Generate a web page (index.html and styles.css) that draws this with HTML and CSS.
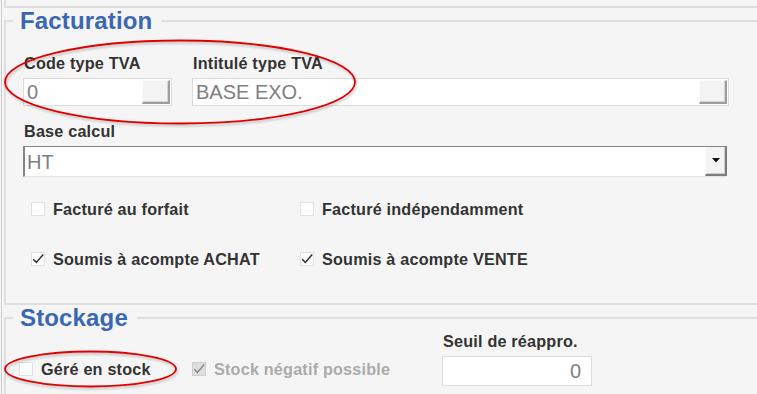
FILE: index.html
```html
<!DOCTYPE html>
<html lang="fr">
<head>
<meta charset="utf-8">
<title>Fiche article</title>
<link rel="stylesheet" href="styles.css">
</head>
<body>
<div class="page">
  <div class="prev"></div>

  <fieldset class="group fact">
    <legend class="legend">Facturation</legend>
    <div class="body">
      <div class="fields">
        <div class="field">
          <label class="lbl">Code type TVA</label>
          <div class="input"><span class="val">0</span><span class="pick"></span></div>
        </div>
        <div class="field">
          <label class="lbl">Intitulé type TVA</label>
          <div class="input"><span class="val">BASE EXO.</span><span class="pick"></span></div>
        </div>
      </div>

      <div class="field base">
        <label class="lbl">Base calcul</label>
        <div class="select">
          <span class="val">HT</span>
          <span class="drop"><svg width="8" height="5" viewBox="0 0 8 5"><polygon points="0,0 8,0 4,4.5" fill="#111"/></svg></span>
        </div>
      </div>

      <div class="checks">
        <div class="chk"><span class="box"></span><span class="txt">Facturé au forfait</span></div>
        <div class="chk"><span class="box"></span><span class="txt">Facturé indépendamment</span></div>
        <div class="chk"><span class="box"><svg width="14" height="14" viewBox="0 0 14 14"><polyline points="2.2,7.2 5.4,10.4 12.2,2.4" fill="none" stroke="#333" stroke-width="1.5"/></svg></span><span class="txt">Soumis à acompte ACHAT</span></div>
        <div class="chk"><span class="box"><svg width="14" height="14" viewBox="0 0 14 14"><polyline points="2.2,7.2 5.4,10.4 12.2,2.4" fill="none" stroke="#333" stroke-width="1.5"/></svg></span><span class="txt">Soumis à acompte VENTE</span></div>
      </div>
    </div>
  </fieldset>

  <fieldset class="group stock">
    <legend class="legend">Stockage</legend>
    <div class="stock-row">
      <div class="chk tall"><span class="box"></span><span class="txt">Géré en stock</span></div>
      <div class="chk tall disabled"><span class="box"><svg width="14" height="14" viewBox="0 0 14 14"><polyline points="2.2,7.2 5.4,10.4 12.2,2.4" fill="none" stroke="#8a8a8a" stroke-width="1.5"/></svg></span><span class="txt">Stock négatif possible</span></div>
      <div class="field">
        <label class="lbl">Seuil de réappro.</label>
        <div class="input num"><span class="val">0</span></div>
      </div>
    </div>
  </fieldset>
</div>

<svg class="marks" width="757" height="394" viewBox="0 0 757 394">
  <ellipse cx="180" cy="82" rx="175" ry="41.5" fill="none" stroke="#e00000" stroke-width="1.8"/>
  <ellipse cx="90.5" cy="369" rx="85.5" ry="17.5" fill="none" stroke="#e00000" stroke-width="1.8"/>
</svg>
</body>
</html>
```
FILE: styles.css
```css
* { box-sizing: border-box; }

body {
  margin: 0;
  padding-left: 1px;
  width: 757px;
  height: 394px;
  overflow: hidden;
  position: relative;
  background: #f5f5f5;
  font-family: "Liberation Sans", Arial, sans-serif;
  color: #333;
}

.page {
  border-left: 1px solid #cdcdcd;
  padding-left: 2px;
  width: 756px;
  min-height: 394px;
}

.prev {
  height: 8px;
  border-left: 2px solid #dedede;
  border-bottom: 2px solid #dedede;
}

.group {
  margin: 0;
  min-width: 0;
  border: 2px solid #dedede;
  border-right: none;
  padding: 0 0 0 7px;
}

.legend {
  padding: 0 9px 0 7px;
  font-size: 24px;
  line-height: 26px;
  font-weight: bold;
  color: #3a67b3;
  letter-spacing: 0.15px;
}

.fact { padding-bottom: 35px; }
.stock { padding-bottom: 20px; }

.body { padding-left: 10px; }

.fields {
  margin-top: 20px;
  display: grid;
  grid-template-columns: 149px 537px;
  column-gap: 20px;
}

.field { display: flex; flex-direction: column; }

.lbl {
  display: block;
  padding-left: 1px;
  font-size: 16.2px;
  line-height: 18px;
  font-weight: bold;
  letter-spacing: 0.2px;
  color: #333;
  margin-bottom: 6px;
  white-space: nowrap;
}

.input {
  height: 28px;
  background: #fff;
  border: 1px solid #dcdcdc;
  padding: 1px;
  display: flex;
  align-items: center;
}

.val {
  flex: 1;
  padding-left: 2px;
  font-size: 20px;
  line-height: 22px;
  color: #808080;
  white-space: nowrap;
}

.pick {
  width: 28px;
  height: 24px;
  background: #f3f3f3;
  border-top: 1px solid #fbfbfb;
  border-left: 1px solid #fbfbfb;
  border-right: 2px solid #9c9c9c;
  border-bottom: 2px solid #9c9c9c;
  box-shadow: inset -1px -1px 0 #d6d6d6;
}

.base { margin-top: 16px; width: 704px; }

.select {
  height: 31px;
  display: flex;
  align-items: stretch;
  background: #fff;
  border-top: 1px solid #858585;
  border-left: 2px solid #858585;
  border-bottom: 1px solid #e2e2e2;
}

.select .val {
  display: flex;
  align-items: center;
  padding-left: 2px;
}

.drop {
  width: 22px;
  display: flex;
  align-items: center;
  justify-content: center;
  background: #f4f4f4;
  border-left: 1px solid #fdfdfd;
  border-right: 2px solid #7c7c7c;
  border-bottom: 2px solid #7c7c7c;
  box-shadow: inset -1px -1px 0 #cfcfcf;
}

.checks {
  margin-top: 23px;
  padding-left: 8px;
  display: grid;
  grid-template-columns: 269px auto;
  row-gap: 32px;
}

.chk {
  display: flex;
  align-items: center;
  gap: 8px;
  height: 18px;
}

.box {
  width: 14px;
  height: 14px;
  flex: none;
  background: #fdfdfd;
  border: 1px solid #e1e1e1;
  display: flex;
  align-items: center;
  justify-content: center;
}

.box svg { display: block; margin: -1px; }

.txt {
  font-size: 16.2px;
  line-height: 18px;
  font-weight: bold;
  letter-spacing: 0.2px;
  color: #333;
  white-space: nowrap;
}

.stock-row {
  margin-top: 1px;
  margin-left: 6px;
  display: grid;
  grid-template-columns: 173px 250px 150px;
  align-items: end;
}

.chk.tall { height: 30px; margin-bottom: 2px; }

.disabled .box { background: #dedede; border-color: #cfcfcf; }
.disabled .txt { color: #ababab; }

.num { height: 30px; }
.num .val { text-align: right; padding-right: 9px; }

.marks {
  position: absolute;
  left: 0;
  top: 0;
  pointer-events: none;
  filter: drop-shadow(1px 2px 1px rgba(0, 0, 0, 0.22));
}
```
